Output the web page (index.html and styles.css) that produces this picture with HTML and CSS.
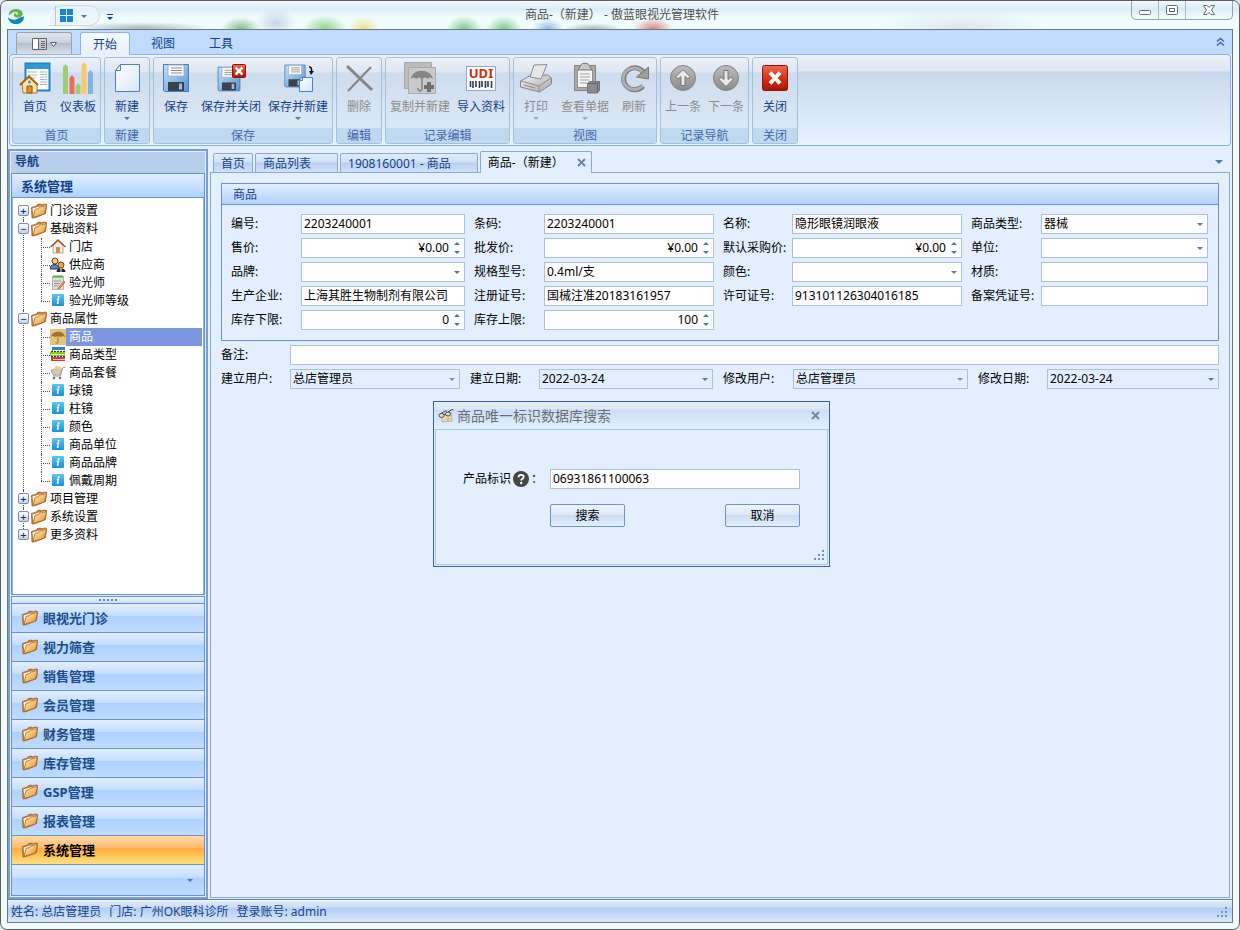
FILE: index.html
```
<!DOCTYPE html>
<html lang="zh-CN">
<head>
    <meta charset="UTF-8">
    <meta name="viewport" content="width=device-width, initial-scale=1.0">
    <title>商品-（新建） - 傲蓝眼视光管理软件</title>
    <link rel="stylesheet" href="styles.css">
</head>
<body>
    <!-- 公用图标 -->
    <svg class="defs" aria-hidden="true">
        <defs>
            <linearGradient id="gFolder" x1="0" y1="0" x2="1" y2="1">
                <stop offset="0" stop-color="#fff4d0"/><stop offset="0.5" stop-color="#f5c070"/><stop offset="1" stop-color="#d98422"/>
            </linearGradient>
            <linearGradient id="gBlue" x1="0" y1="0" x2="1" y2="1">
                <stop offset="0" stop-color="#c5e2fa"/><stop offset="1" stop-color="#5b93cf"/>
            </linearGradient>
            <linearGradient id="gPaper" x1="0" y1="0" x2="1" y2="1">
                <stop offset="0" stop-color="#ffffff"/><stop offset="1" stop-color="#d6e8fa"/>
            </linearGradient>
            <linearGradient id="gGray" x1="0" y1="0" x2="0" y2="1">
                <stop offset="0" stop-color="#bdbdbd"/><stop offset="1" stop-color="#8a8a8a"/>
            </linearGradient>
            <linearGradient id="gLight" x1="0" y1="0" x2="1" y2="1">
                <stop offset="0" stop-color="#f2f2f2"/><stop offset="1" stop-color="#a8a8a8"/>
            </linearGradient>
            <linearGradient id="gRed" x1="0" y1="0" x2="0" y2="1">
                <stop offset="0" stop-color="#f0694f"/><stop offset="0.5" stop-color="#d83418"/><stop offset="1" stop-color="#a81400"/>
            </linearGradient>
            <linearGradient id="gInfo" x1="0" y1="0" x2="0" y2="1">
                <stop offset="0" stop-color="#5cc4f0"/><stop offset="1" stop-color="#1a8fd8"/>
            </linearGradient>
            <symbol id="folder" viewBox="0 0 16 16">
                <path d="M.5 4.500l5-1.500 1-1.500 3-.5.5 1 4-1 1.500.5-1 9-10 4-3.500.5z" fill="#c98238" stroke="#a0602a" stroke-width=".8"/>
                <path d="M1.500 5.500l5-1.500 8-2-2 8-10 4z" fill="#fff6e0"/>
                <path d="M4 6.500l3.500-1 1-1.300 7-1.700-2 8.500-11.500 3.500z" fill="url(#gFolder)" stroke="#a86428" stroke-width=".8"/>
            </symbol>
            <symbol id="info" viewBox="0 0 16 16">
                <rect x="2" y="1" width="12" height="12" rx="1" fill="url(#gInfo)"/>
                <circle cx="8.600" cy="4" r="1" fill="#fff"/>
                <path d="M6.800 6.200h1.700l-1 4h1.300" fill="none" stroke="#fff" stroke-width="1.300"/>
            </symbol>
            <symbol id="floppy" viewBox="0 0 32 32">
                <path d="M3.500 2.500h25v27h-24l-1-1z" fill="url(#gBlue)" stroke="#4a7db5"/>
                <path d="M8 3h16v11h-16z" fill="#fdfdfd" stroke="#9db8d4"/>
                <path d="M11 6h11M11 8.500h11M11 11h11" stroke="#8a8a8a"/>
                <path d="M8 20h16v9h-16z" fill="#3c4248"/>
                <path d="M19 21.500h3v6h-3z" fill="#8fc0ea"/>
            </symbol>
        </defs>
    </svg>

    <div class="window">
        <header class="title-bar">
            <svg class="logo" viewBox="0 0 16 16" aria-hidden="true">
                <path d="M.5 7.500a7.500 7 0 0 1 14.500-2c-.5 4-6.500 5.500-9 2.500-1-1.500.5-3.500 2.500-2.500-.5 1.500.5 1.500 1.500 1 .5-2-1.500-3-3.500-2.500C4 4.500 2.500 6 .5 7.500z" fill="#64b346"/>
                <path d="M0 9c3 3 7 3.500 10 1.500 2-1.300 4-2 6-2a8 7.500 0 0 1-16 .5z" fill="#1586b8"/>
            </svg>
            <div class="quick-bar">
                <button type="button" aria-label="切换视图">
                    <svg width="14" height="14" viewBox="0 0 14 14"><path d="M0 0h6v6H0zM7 0h6v6H7zM0 7h6v6H0zM7 7h6v6H7z" fill="#1587d8"/></svg>
                    <i class="arrow"></i>
                </button>
            </div>
            <button type="button" class="quick-more" aria-label="自定义快速访问工具栏"><i class="arrow"></i></button>
            <h1>商品-（新建） - 傲蓝眼视光管理软件</h1>
            <div class="win-buttons">
                <button type="button" aria-label="最小化"><svg width="14" height="12" viewBox="0 0 14 12"><rect x="1.500" y="6.500" width="11" height="4" rx="1" fill="#fff" stroke="#666c7c"/></svg></button>
                <button type="button" aria-label="最大化"><svg width="14" height="12" viewBox="0 0 14 12"><rect x="1.500" y="1.500" width="11" height="9" rx="1" fill="#fff" stroke="#666c7c"/><rect x="4.500" y="4.500" width="5" height="3" fill="#fff" stroke="#666c7c"/></svg></button>
                <button type="button" class="wide" aria-label="关闭窗口"><svg width="14" height="12" viewBox="0 0 14 12"><path d="M1.500 1.500h3.500l2 2 2-2h3.500l-3 4.500 3 4.500h-3.500l-2-2-2 2H1.500l3-4.500z" fill="#fff" stroke="#666c7c"/></svg></button>
            </div>
        </header>

        <div class="client">
            <nav class="ribbon-tabs">
                <button type="button" class="app-button" aria-label="应用菜单">
                    <svg width="27" height="14" viewBox="0 0 27 14"><path d="M1.500 1.500h14v11h-14zM7.500 1v12M10 4.500h4M10 6.500h4M10 8.500h4M10 10.500h4" fill="none" stroke="#666"/><path d="M2 2h5v10h-5z" fill="#fff"/><path d="M19.500 5.500h6l-3 4z" fill="#fff" stroke="#666"/></svg>
                </button>
                <button type="button" class="ribbon-tab active">开始</button>
                <button type="button" class="ribbon-tab">视图</button>
                <button type="button" class="ribbon-tab">工具</button>
                <button type="button" class="collapse" aria-label="折叠功能区"><svg width="9" height="10" viewBox="0 0 9 10"><path d="M1 4.500l3.500-3 3.500 3M1 8.500l3.500-3 3.500 3" fill="none" stroke="#3f6ab0" stroke-width="1.500"/></svg></button>
            </nav>

            <div class="ribbon">
                <section class="group">
                    <div class="tools">
                        <button type="button" class="tool">
                            <svg viewBox="0 0 32 32">
                                <path d="M6.500 1.500h24v27h-24z" fill="#fff" stroke="#1b86c2" stroke-width="2"/><path d="M7 2h23v5h-23z" fill="#2a9ada"/>
                                <path d="M9 10h9M9 13h9M9 16h8M21 10h7M21 12.500h7M21 15h7M21 17.500h7M21 20h7M21 22.500h7" stroke="#9dbbd0"/>
                                <path d="M3 22l7-7 8 7v9h-14z" fill="#fbe3a8" stroke="#b87820"/><path d="M1 23l9-8.500 9 8.500" fill="none" stroke="#a86418" stroke-width="2"/>
                                <path d="M8 24h5v7h-5z" fill="#d98f38" stroke="#8c5410"/><circle cx="10.500" cy="20" r="1.500" fill="#49a"/>
                            </svg>
                            <span>首页</span>
                        </button>
                        <button type="button" class="tool">
                            <svg viewBox="0 0 32 32">
                                <path d="M1 32V5l2.500-3L6 5v27z" fill="#9cce74"/><path d="M7.500 32V16l2.500-3 2.500 3v16z" fill="#ef6a5a"/>
                                <path d="M13.500 32v-8l2.500-3 2.500 3v8z" fill="#9cce74"/><path d="M19.500 32V3L22 0l2.500 3v29z" fill="#fbc968"/>
                                <path d="M26 32V11l2.500-3L31 11v21z" fill="#7ab8e2"/>
                            </svg>
                            <span>仪表板</span>
                        </button>
                    </div>
                    <h2>首页</h2>
                </section>
                <section class="group">
                    <div class="tools">
                        <button type="button" class="tool">
                            <svg viewBox="0 0 32 32"><path d="M9.500 2.500h19v27h-24v-21z" fill="url(#gPaper)" stroke="#4a84c4"/><path d="M9.500 2.500v6h-5z" fill="#fff" stroke="#4a84c4"/></svg>
                            <span>新建</span><i class="arrow"></i>
                        </button>
                    </div>
                    <h2>新建</h2>
                </section>
                <section class="group">
                    <div class="tools">
                        <button type="button" class="tool"><svg viewBox="0 0 32 32"><use href="#floppy"/></svg><span>保存</span></button>
                        <button type="button" class="tool">
                            <svg viewBox="0 0 32 32">
                                <use href="#floppy" y="3" width="28" height="28"/>
                                <rect x="17.500" y="2.500" width="13" height="13" rx="1" fill="url(#gRed)" stroke="#8e1606"/><path d="M20.500 5.500l7 7M27.500 5.500l-7 7" stroke="#fff" stroke-width="2.500"/>
                            </svg>
                            <span>保存并关闭</span>
                        </button>
                        <button type="button" class="tool">
                            <svg viewBox="0 0 32 32">
                                <use href="#floppy" width="26" height="28"/>
                                <path d="M19.500 15.500h11v14h-13v-11z" fill="url(#gPaper)" stroke="#4a84c4"/><path d="M20.500 15.500v3h-3" fill="none" stroke="#4a84c4"/>
                                <path d="M27 5c2 0 3 1 2.500 5" fill="none" stroke="#111" stroke-width="1.500"/><path d="M27 9h5l-3 4z" fill="#111"/>
                            </svg>
                            <span>保存并新建</span><i class="arrow"></i>
                        </button>
                    </div>
                    <h2>保存</h2>
                </section>
                <section class="group">
                    <div class="tools">
                        <button type="button" class="tool" disabled><svg viewBox="0 0 32 32"><path d="M4 4l25 24" stroke="#858585" stroke-width="3"/><path d="M28 5L5 29" stroke="#858585" stroke-width="2"/></svg><span>删除</span></button>
                    </div>
                    <h2>编辑</h2>
                </section>
                <section class="group">
                    <div class="tools">
                        <button type="button" class="tool" disabled>
                            <svg viewBox="0 0 32 32">
                                <path d="M.5.500h27v26h-27z" fill="#bcbcbc" stroke="#a8a8a8"/><path d="M4.500 5.500h27v26h-27z" fill="#c9c9c9" stroke="#aaa"/>
                                <path d="M7 17c1-11 20-11 22 0-2-2-4-2-5 0-2-2-4-2-6 0-2-2-4-2-6 0-1-2-3-2-5 0z" fill="#858585"/>
                                <path d="M18 16v10c0 4-4 4-4 0" fill="none" stroke="#858585" stroke-width="1.500"/><path d="M20 25h10M25 20v10" stroke="#707070" stroke-width="4"/>
                            </svg>
                            <span>复制并新建</span>
                        </button>
                        <button type="button" class="tool">
                            <svg viewBox="0 0 32 32">
                                <rect x="1.500" y="4.500" width="29" height="24" fill="#fff" stroke="#8ea8d8"/>
                                <text x="16" y="16" class="udi">UDI</text>
                                <path d="M5.500 19v6M8 19v7M11 19v6M14.500 19v7M17 19v6M20.500 19v7M23 19v6M26.500 19v7" stroke="#333a50" stroke-width="1.600"/>
                            </svg>
                            <span>导入资料</span>
                        </button>
                    </div>
                    <h2>记录编辑</h2>
                </section>
                <section class="group">
                    <div class="tools">
                        <button type="button" class="tool" disabled>
                            <svg viewBox="0 0 32 32"><path d="M.5 19l9-5 18-1 4 3v6l-12 8-19-5z" fill="url(#gLight)" stroke="#858585"/><path d="M14 3l13-.5-6 14.500-11-2z" fill="#e6e6e6" stroke="#8c8c8c"/><path d="M1 19l18 5 12-8M19 24v6M4 23l11 3" fill="none" stroke="#8c8c8c"/></svg>
                            <span>打印</span><i class="arrow"></i>
                        </button>
                        <button type="button" class="tool" disabled>
                            <svg viewBox="0 0 32 32"><path d="M5.500 3.500h21v25h-21z" fill="#aaa" stroke="#858585"/><path d="M8.500 7.500h15v18h-15z" fill="#f4f4f4" stroke="#909090"/><path d="M11 5c0-5 10-5 10 0l2 3H9z" fill="#c8c8c8" stroke="#777"/><path d="M11 12h10M11 15h10M11 18h9M11 21h7" stroke="#a0a0a0"/><path d="M18.500 21.500l2-2h10v9l-2 2.500h-10z" fill="#8b8b8b" stroke="#777"/><path d="M18.500 21.500h10v9M28.500 21.500l2-2" stroke="#666" fill="none"/></svg>
                            <span>查看单据</span><i class="arrow"></i>
                        </button>
                        <button type="button" class="tool" disabled>
                            <svg viewBox="0 0 32 32"><path d="M25 24a11 11 0 1 1 1-13" fill="none" stroke="#7b7b7b" stroke-width="5"/><path d="M24.500 23.500a10.800 10.800 0 1 1 1-12" fill="none" stroke="#aeaeae" stroke-width="3"/><path d="M30.500 5v12l-12-2z" fill="#9c9c9c" stroke="#7b7b7b"/></svg>
                            <span>刷新</span>
                        </button>
                    </div>
                    <h2>视图</h2>
                </section>
                <section class="group">
                    <div class="tools">
                        <button type="button" class="tool" disabled>
                            <svg viewBox="0 0 32 32"><circle cx="16" cy="16" r="12.500" fill="url(#gGray)" stroke="#828282"/><path d="M16 7.500l7 7-2 2.500-3-2.500v9h-4v-9l-3 2.500-2-2.500z" fill="#e8e8e8" stroke="#777"/></svg>
                            <span>上一条</span>
                        </button>
                        <button type="button" class="tool" disabled>
                            <svg viewBox="0 0 32 32"><circle cx="16" cy="16" r="12.500" fill="url(#gGray)" stroke="#828282"/><path d="M16 24.500l7-7-2-2.500-3 2.500v-9h-4v9l-3-2.500-2 2.500z" fill="#e8e8e8" stroke="#777"/></svg>
                            <span>下一条</span>
                        </button>
                    </div>
                    <h2>记录导航</h2>
                </section>
                <section class="group">
                    <div class="tools">
                        <button type="button" class="tool">
                            <svg viewBox="0 0 32 32"><rect x="3.500" y="3.500" width="25" height="25" rx="2" fill="url(#gRed)" stroke="#8e1606"/><path d="M11 10.500l10 11M21 10.500l-10 11" stroke="#fff" stroke-width="4"/></svg>
                            <span>关闭</span>
                        </button>
                    </div>
                    <h2>关闭</h2>
                </section>
            </div>

            <div class="workspace">
                <aside class="sidebar">
                    <h2 class="side-title">导航</h2>
                    <div class="side-box tree-box">
                        <h3 class="side-group">系统管理</h3>
                        <ul class="tree">
                            <li><button type="button" class="toggle" aria-label="展开">+</button><a href="#"><svg class="ico"><use href="#folder"/></svg><span>门诊设置</span></a></li>
                            <li><button type="button" class="toggle" aria-label="收起">−</button><a href="#"><svg class="ico"><use href="#folder"/></svg><span>基础资料</span></a>
                                <ul>
                                    <li><a href="#"><svg class="ico" viewBox="0 0 16 16"><path d="M3 7v7h10V7L8 2z" fill="#f4efe8" stroke="#b8a898"/><path d="M.5 8L8 1l7.500 7" fill="none" stroke="#a8502c" stroke-width="1.500"/><path d="M6 8h4v6H6z" fill="#e2873c"/></svg><span>门店</span></a></li>
                                    <li><a href="#"><svg class="ico" viewBox="0 0 16 16"><circle cx="5" cy="4" r="3" fill="#f3c88c" stroke="#6b4318"/><path d="M0 12c0-6 9-6 9 0z" fill="#5d87c8" stroke="#234"/><circle cx="11" cy="8" r="3" fill="#f0a844" stroke="#6b4318"/><path d="M6.500 15c0-5 9-5 9 0z" fill="#222"/><path d="M11 11v4" stroke="#fff"/></svg><span>供应商</span></a></li>
                                    <li><a href="#"><svg class="ico" viewBox="0 0 16 16"><path d="M2.500 1.500h11v13h-11z" fill="#dcdcdc" stroke="#b4b4b4"/><path d="M3 1.500h10" stroke="#58b030" stroke-width="2"/><path d="M4 6h7M4 8.500h6M4 11h4" stroke="#999"/><path d="M14 6l-5 6-1 2 2-1 5-6z" fill="#f0b040" stroke="#c03020" stroke-width=".6"/></svg><span>验光师</span></a></li>
                                    <li><a href="#"><svg class="ico"><use href="#info"/></svg><span>验光师等级</span></a></li>
                                </ul>
                            </li>
                            <li><button type="button" class="toggle" aria-label="收起">−</button><a href="#"><svg class="ico"><use href="#folder"/></svg><span>商品属性</span></a>
                                <ul>
                                    <li><a href="#" class="selected" aria-current="page"><svg class="ico" viewBox="0 0 16 16"><path d="M0 0h16v16H0z" fill="#e6c47c"/><path d="M1 8c1-7 13-7 14 0l-2-1-2 1-3-1-3 1-2-1z" fill="#a5712c"/><path d="M8 7v6c0 2-2 2-2 0" fill="none" stroke="#a5712c"/></svg><span>商品</span></a></li>
                                    <li><a href="#"><svg class="ico" viewBox="0 0 16 16"><path d="M2 0h13v4H2z" fill="#2a86c8"/><path d="M0 5h15v4H0z" fill="#7fd01c"/><path d="M1 10h14v4H1z" fill="#d83c30"/><path d="M3 3.500h12M1 7.500h13" stroke="#e8f6d0"/><path d="M1 9.500h14M1 4.500h14" stroke="#333" stroke-dasharray="2 1"/><path d="M3 12.500h12" stroke="#f8c8b8"/></svg><span>商品类型</span></a></li>
                                    <li><a href="#"><svg class="ico" viewBox="0 0 16 16"><path d="M1 5l11-1-2 6H3z" fill="#cfc9bc" stroke="#b4ac9c"/><path d="M3 4l3-3 5 1v3z" fill="#ecd48c"/><path d="M15.500 2l-3 1-2 8H3" fill="none" stroke="#999"/><circle cx="4" cy="13" r="1.300" fill="#777"/><circle cx="10" cy="13" r="1.300" fill="#777"/></svg><span>商品套餐</span></a></li>
                                    <li><a href="#"><svg class="ico"><use href="#info"/></svg><span>球镜</span></a></li>
                                    <li><a href="#"><svg class="ico"><use href="#info"/></svg><span>柱镜</span></a></li>
                                    <li><a href="#"><svg class="ico"><use href="#info"/></svg><span>颜色</span></a></li>
                                    <li><a href="#"><svg class="ico"><use href="#info"/></svg><span>商品单位</span></a></li>
                                    <li><a href="#"><svg class="ico"><use href="#info"/></svg><span>商品品牌</span></a></li>
                                    <li><a href="#"><svg class="ico"><use href="#info"/></svg><span>佩戴周期</span></a></li>
                                </ul>
                            </li>
                            <li><button type="button" class="toggle" aria-label="展开">+</button><a href="#"><svg class="ico"><use href="#folder"/></svg><span>项目管理</span></a></li>
                            <li><button type="button" class="toggle" aria-label="展开">+</button><a href="#"><svg class="ico"><use href="#folder"/></svg><span>系统设置</span></a></li>
                            <li><button type="button" class="toggle" aria-label="展开">+</button><a href="#"><svg class="ico"><use href="#folder"/></svg><span>更多资料</span></a></li>
                        </ul>
                    </div>
                    <nav class="side-box side-nav">
                        <div class="splitter"><i></i><i></i><i></i><i></i><i></i></div>
                        <a href="#"><svg class="ico"><use href="#folder"/></svg>眼视光门诊</a>
                        <a href="#"><svg class="ico"><use href="#folder"/></svg>视力筛查</a>
                        <a href="#"><svg class="ico"><use href="#folder"/></svg>销售管理</a>
                        <a href="#"><svg class="ico"><use href="#folder"/></svg>会员管理</a>
                        <a href="#"><svg class="ico"><use href="#folder"/></svg>财务管理</a>
                        <a href="#"><svg class="ico"><use href="#folder"/></svg>库存管理</a>
                        <a href="#"><svg class="ico"><use href="#folder"/></svg>GSP管理</a>
                        <a href="#"><svg class="ico"><use href="#folder"/></svg>报表管理</a>
                        <a href="#" class="active"><svg class="ico"><use href="#folder"/></svg>系统管理</a>
                        <button type="button" class="overflow" aria-label="更多"><i class="arrow"></i></button>
                    </nav>
                </aside>

                <main class="main">
                    <div class="doc-tabs">
                        <button type="button" class="doc-tab">首页</button>
                        <button type="button" class="doc-tab closable">商品列表</button>
                        <button type="button" class="doc-tab closable">1908160001 - 商品</button>
                        <div class="doc-tab active">
                            <span>商品-（新建）</span>
                            <button type="button" class="close" aria-label="关闭标签"><svg width="9" height="9" viewBox="0 0 9 9"><path d="M1 1l7 7M8 1l-7 7" stroke="#6f85ab" stroke-width="2"/></svg></button>
                        </div>
                        <button type="button" class="tab-list" aria-label="标签列表"><i class="arrow"></i></button>
                    </div>

                    <form class="document">
                        <fieldset class="panel">
                            <legend>商品</legend>
                            <div class="fields">
                                <label for="code">编号:</label><div class="box"><input id="code" type="text" value="2203240001"></div>
                                <label for="barcode">条码:</label><div class="box"><input id="barcode" type="text" value="2203240001"></div>
                                <label for="name">名称:</label><div class="box"><input id="name" type="text" value="隐形眼镜润眼液"></div>
                                <label for="type">商品类型:</label><div class="box combo"><select id="type"><option>器械</option></select></div>

                                <label for="price">售价:</label><div class="box spin"><input id="price" type="text" value="¥0.00"></div>
                                <label for="wholesale">批发价:</label><div class="box spin"><input id="wholesale" type="text" value="¥0.00"></div>
                                <label for="cost">默认采购价:</label><div class="box spin"><input id="cost" type="text" value="¥0.00"></div>
                                <label for="unit">单位:</label><div class="box combo"><select id="unit"><option></option></select></div>

                                <label for="brand">品牌:</label><div class="box combo"><select id="brand"><option></option></select></div>
                                <label for="spec">规格型号:</label><div class="box"><input id="spec" type="text" value="0.4ml/支"></div>
                                <label for="color">颜色:</label><div class="box combo"><select id="color"><option></option></select></div>
                                <label for="material">材质:</label><div class="box"><input id="material" type="text"></div>

                                <label for="maker">生产企业:</label><div class="box"><input id="maker" type="text" value="上海其胜生物制剂有限公司"></div>
                                <label for="regno">注册证号:</label><div class="box"><input id="regno" type="text" value="国械注准20183161957"></div>
                                <label for="license">许可证号:</label><div class="box"><input id="license" type="text" value="913101126304016185"></div>
                                <label for="record">备案凭证号:</label><div class="box"><input id="record" type="text"></div>

                                <label for="min">库存下限:</label><div class="box spin"><input id="min" type="text" value="0"></div>
                                <label for="max">库存上限:</label><div class="box spin"><input id="max" type="text" value="100"></div>
                            </div>
                        </fieldset>
                        <div class="remark">
                            <label for="remark">备注:</label><div class="box"><input id="remark" type="text"></div>
                        </div>
                        <div class="audit">
                            <label for="creator">建立用户:</label><div class="box combo readonly off"><select id="creator"><option>总店管理员</option></select></div>
                            <label for="created">建立日期:</label><div class="box combo readonly"><input id="created" type="text" value="2022-03-24" readonly></div>
                            <label for="editor">修改用户:</label><div class="box combo readonly off"><select id="editor"><option>总店管理员</option></select></div>
                            <label for="edited">修改日期:</label><div class="box combo readonly"><input id="edited" type="text" value="2022-03-24" readonly></div>
                        </div>
                    </form>
                </main>
            </div>

            <footer class="status-bar">
                <span>姓名: 总店管理员</span><span>门店: 广州OK眼科诊所</span><span>登录账号: admin</span>
                <svg class="grip" viewBox="0 0 11 11"><path d="M8 0h2v2H8zM4 4h2v2H4zM8 4h2v2H8zM0 8h2v2H0zM4 8h2v2H4zM8 8h2v2H8z"/></svg>
            </footer>
        </div>

        <!-- 浮动窗口 -->
        <form class="dialog" role="dialog" aria-labelledby="dialogTitle">
            <div class="dialog-title">
                <svg class="ico" viewBox="0 0 16 16"><path d="M3 6l10-2 1 9-10 1z" fill="#e0d8c0" stroke="#bdb498"/><path d="M2 6l5-3 2 0M10 4l4-2.500 1.500.5" fill="none" stroke="#4c4c4c"/><ellipse cx="3.500" cy="7.500" rx="2.500" ry="2" fill="#ddd" stroke="#4c4c4c"/><ellipse cx="10" cy="6" rx="2.500" ry="2" fill="#ddd" stroke="#4c4c4c"/><path d="M6 7l2-.5" stroke="#4c4c4c"/><circle cx="10" cy="11" r="1.500" fill="#e8c02c"/></svg>
                <h2 id="dialogTitle">商品唯一标识数据库搜索</h2>
                <button type="button" class="close" aria-label="关闭"><svg width="9" height="9" viewBox="0 0 9 9"><path d="M1 1l7 7M8 1l-7 7" stroke="#6f85ab" stroke-width="2"/></svg></button>
            </div>
            <div class="dialog-body">
                <label for="udi">产品标识<svg class="help" viewBox="0 0 16 16"><circle cx="8" cy="8" r="8" fill="#454545"/><path d="M5.500 6.300c0-3.300 5.200-3.300 5.200-.3 0 1.700-2.500 1.900-2.500 3.600" fill="none" stroke="#fff" stroke-width="1.800"/><circle cx="8.200" cy="12" r="1.200" fill="#fff"/></svg>：</label>
                <div class="box"><input id="udi" type="text" value="06931861100063"></div>
                <div class="actions">
                    <button type="button">搜索</button>
                    <button type="button">取消</button>
                </div>
                <svg class="grip" viewBox="0 0 11 11"><path d="M8 0h2v2H8zM4 4h2v2H4zM8 4h2v2H8zM0 8h2v2H0zM4 8h2v2H4zM8 8h2v2H8z"/></svg>
            </div>
        </form>
    </div>
</body>
</html>
```
FILE: styles.css
```
* {
    box-sizing: border-box;
}
body {
    margin: 0;
    background-color: #dfe8ea;
    color: #000;
    font: 12px/18px "Noto Sans", "Noto Sans CJK SC", sans-serif;
}
h1, h2, h3, ul {
    margin: 0;
    padding: 0;
    font-size: 12px;
    font-weight: normal;
}
ul {
    list-style: none;
}
a {
    color: inherit;
    text-decoration: none;
}
button, input, select {
    margin: 0;
    padding: 0;
    border: none;
    background: none;
    color: inherit;
    font: inherit;
}
svg {
    display: block;
    flex: none;
}
.defs {
    position: absolute;
    width: 0;
    height: 0;
}
.ico {
    width: 16px;
    height: 16px;
}
.arrow {
    display: block;
    width: 0;
    height: 0;
    border: 3px solid transparent;
    border-top-color: #4a78b8;
    border-bottom: none;
}

/* 窗口外框 */
.window {
    position: relative;
    display: flex;
    flex-direction: column;
    min-height: 100vh;
    padding: 0 6px 6px;
    border: 1px solid #5d5f61;
    border-radius: 7px;
    background-color: #f0fcfc;
    background-image:
        radial-gradient(ellipse 20px 12px at 240px 28px, #82bd8c, transparent),
        radial-gradient(ellipse 70px 6px at 140px 27px, #a9b9bd, transparent),
        radial-gradient(ellipse 20px 14px at 275px 22px, #c8d4ea, transparent),
        radial-gradient(ellipse 22px 14px at 324px 28px, #8dd48d, transparent),
        radial-gradient(ellipse 16px 14px at 363px 29px, #f2dc84, transparent),
        radial-gradient(ellipse 18px 14px at 463px 29px, #7cc48c, transparent),
        radial-gradient(ellipse 18px 14px at 503px 29px, #7cc48c, transparent),
        radial-gradient(ellipse 16px 10px at 547px 28px, #8cb8f0, transparent),
        radial-gradient(ellipse 30px 6px at 592px 28px, #a8b4bc, transparent),
        radial-gradient(ellipse 20px 12px at 652px 28px, #d88484, transparent),
        radial-gradient(ellipse 90px 20px at 960px 28px, #dce8e8, transparent),
        linear-gradient(#f4fafe 0, #d9ecf9 8px, #effcfc 16px, #effffc 28px, transparent 30px);
}
.title-bar {
    display: flex;
    height: 28px;
}
.title-bar h1 {
    flex: 1;
    padding-top: 5px;
    color: #4c5054;
    text-align: center;
    text-shadow: 0 0 5px #fff;
}
.logo {
    width: 16px;
    height: 16px;
    margin: 7px 0 0 1px;
}
.quick-bar {
    height: 21px;
    margin: 4px 0 0 24px;
    padding: 0 12px 0 6px;
    border: 1px solid #cfdae4;
    border-left-color: #fff;
    border-radius: 16px 11px 11px 2px;
    background-color: rgba(235, 243, 252, 0.7);
}
.quick-bar button {
    display: flex;
    align-items: center;
    gap: 7px;
    height: 20px;
    padding-left: 4px;
    border-left: 1px solid #b8c6d4;
}
.quick-more {
    align-self: center;
    margin: 4px 0 0 7px;
    padding-top: 2px;
    border-top: 1px solid #15428b;
}
.quick-more .arrow {
    border-top-color: #15428b;
}
.win-buttons {
    display: flex;
    height: 19px;
    border: 1px solid #9aa2aa;
    border-top: none;
    border-radius: 0 0 5px 5px;
}
.win-buttons button {
    display: flex;
    justify-content: center;
    width: 27px;
    padding-top: 3px;
    border-right: 1px solid #b0b8be;
}
.win-buttons .wide {
    width: 46px;
    border-right: none;
}
.client {
    flex: 1;
    display: flex;
    flex-direction: column;
    border: 1px solid #707880;
    background-color: #e3efff;
}

/* 功能区 */
.ribbon-tabs {
    display: flex;
    align-items: flex-end;
    height: 24px;
    padding: 0 8px;
    background-color: #bfdbff;
    color: #15428b;
}
.app-button {
    display: flex;
    align-items: center;
    justify-content: center;
    width: 56px;
    height: 22px;
    margin-right: 8px;
    border: 1px solid #98a4b4;
    border-bottom: none;
    border-radius: 3px 3px 0 0;
    background: linear-gradient(#dfe5ee 0, #cbd2dd 45%, #b4bece 50%, #d8e2ec);
}
.ribbon-tab {
    width: 50px;
    height: 22px;
    margin-right: 8px;
    padding-top: 2px;
    border-radius: 3px 3px 0 0;
}
.ribbon-tab.active {
    position: relative;
    height: 23px;
    margin-bottom: -1px;
    border: 1px solid #8db2e3;
    border-bottom: none;
    background: linear-gradient(#f6faff, #e7effa);
}
.collapse {
    margin: 0 -1px 7px auto;
}
.ribbon {
    display: flex;
    gap: 3px;
    height: 92px;
    margin: 0 1px 3px;
    padding: 2px;
    border: 1px solid #8db2e3;
    border-bottom-color: #86b4cc;
    border-radius: 4px;
    background: linear-gradient(#eef2fa 0, #dbe6f4 16px, #c9d9ec 17px, #d8e6f6 60%, #e6f3ff);
}
.group {
    display: flex;
    flex-direction: column;
    height: 87px;
    border: 1px solid #a3c0dc;
    border-radius: 3px;
    background: linear-gradient(#ebf0f8 0, #dde7f4 14px, #cddcee 15px, #dfebf8);
    overflow: hidden;
}
.group h2 {
    height: 15px;
    background-color: #c1d8f1;
    color: #3e6aaa;
    line-height: 16px;
    text-align: center;
}
.tools {
    flex: 1;
    display: flex;
    gap: 1px;
    padding: 4px 1px 0;
}
.tool {
    display: flex;
    flex-direction: column;
    align-items: center;
    min-width: 42px;
    padding: 0 3px;
    color: #15428b;
    white-space: nowrap;
}
.tool svg {
    width: 32px;
    height: 32px;
}
.tool span {
    margin: 4px 0 1px;
}
.tool:disabled {
    color: #8d8d8d;
}
.tool:disabled .arrow {
    opacity: 0.5;
}
.udi {
    fill: #d42a10;
    font: bold 13px "Noto Sans", sans-serif;
    text-anchor: middle;
}

/* 左侧导航 */
.workspace {
    flex: 1;
    display: flex;
    gap: 2px;
}
.sidebar {
    display: flex;
    flex-direction: column;
    width: 200px;
    padding: 1px;
    border: 2px solid #7a9fd0;
    background-color: #e3efff;
}
.side-title {
    height: 21px;
    padding-left: 4px;
    background-color: #b8cfea;
    color: #15428b;
    font-weight: bold;
    line-height: 20px;
}
.side-box {
    border: 1px solid #6593cf;
}
.tree-box {
    flex: 1;
    display: flex;
    flex-direction: column;
    margin-bottom: 1px;
}
.side-group {
    height: 24px;
    padding-left: 9px;
    border-bottom: 1px solid #6593cf;
    background: linear-gradient(#e3efff, #aed1ff);
    color: #15428b;
    font-size: 13px;
    font-weight: bold;
    line-height: 24px;
}
.tree {
    flex: 1;
    padding: 4px 1px 0 5px;
    border: 1px solid #8fb3e4;
    border-width: 0 1px;
    background-color: #fff;
}
.tree li {
    position: relative;
}
.tree > li::before {
    content: "";
    position: absolute;
    top: 0;
    bottom: 0;
    left: 5px;
    border-left: 1px dotted #555;
}
.tree > li:first-child::before {
    top: 9px;
}
.tree > li:last-child::before {
    bottom: 9px;
}
.tree > li > a {
    padding-left: 13px;
}
.tree a {
    display: flex;
    align-items: center;
    height: 18px;
}
.tree a span {
    flex: 1;
    padding-left: 3px;
}
.tree ul {
    margin-left: 23px;
}
.tree ul li {
    padding-left: 9px;
}
.tree ul li::before {
    content: "";
    position: absolute;
    top: 0;
    bottom: 0;
    left: 0;
    border-left: 1px dotted #555;
}
.tree ul li:last-child::before {
    bottom: 9px;
}
.tree ul li::after {
    content: "";
    position: absolute;
    top: 9px;
    left: 0;
    width: 9px;
    border-top: 1px dotted #555;
}
.tree .selected span {
    background-color: #7c96df;
    color: #fff;
}
.toggle {
    position: absolute;
    top: 3px;
    left: 0;
    width: 11px;
    height: 11px;
    border: 1px solid #7c8cb0;
    border-radius: 2px;
    background: linear-gradient(#fff, #c8d4ea);
    color: #1c2c58;
    font-size: 11px;
    line-height: 8px;
}
.splitter {
    display: flex;
    align-items: center;
    justify-content: center;
    gap: 2px;
    height: 7px;
    border-bottom: 1px solid #6593cf;
    background: linear-gradient(#f0f7ff, #c8dffc);
}
.splitter i {
    width: 2px;
    height: 2px;
    background-color: #5c88c8;
}
.side-nav a {
    display: flex;
    align-items: center;
    gap: 5px;
    height: 29px;
    padding-left: 10px;
    border-bottom: 1px solid #6593cf;
    background: linear-gradient(#e3efff 0, #c4ddff 42%, #add1ff 43%, #c0dbff);
    color: #204d89;
    font-size: 13px;
    font-weight: bold;
}
.side-nav a.active {
    background: linear-gradient(#ffd9aa 0, #ffbb6e 42%, #ffab3f 43%, #fee17a);
    color: #000;
}
.overflow {
    display: flex;
    align-items: center;
    justify-content: flex-end;
    width: 100%;
    height: 30px;
    padding-right: 11px;
    background: linear-gradient(#e3efff 0, #c4ddff 42%, #add1ff 43%, #c0dbff);
}

/* 文档区 */
.main {
    flex: 1;
    display: flex;
    flex-direction: column;
    min-width: 0;
    padding: 2px 2px 1px 0;
}
.doc-tabs {
    display: flex;
    align-items: flex-end;
    gap: 2px;
    height: 21px;
    padding-left: 3px;
}
.doc-tab {
    height: 19px;
    padding: 0 7px;
    border: 1px solid #8ca9d2;
    border-bottom: none;
    border-radius: 2px 2px 0 0;
    background: linear-gradient(#dfecfe 0, #d0e1f8 45%, #b8d0f0 50%, #d0e2fa);
    color: #15428b;
    line-height: 19px;
    white-space: nowrap;
}
.doc-tab.closable {
    padding-right: 26px;
}
.doc-tab.active {
    position: relative;
    display: flex;
    align-items: center;
    gap: 13px;
    height: 22px;
    margin-bottom: -1px;
    padding: 0 5px 0 7px;
    background: #e3efff;
    color: #000;
}
.tab-list {
    align-self: center;
    margin: 0 7px 0 auto;
}
.tab-list .arrow {
    border-width: 4px 4px 0;
}
.document {
    flex: 1;
    padding: 10px;
    border: 1px solid #8ca9d2;
}
.panel {
    min-width: 0;
    margin: 0 0 4px;
    padding: 0;
    border: 1px solid #6593cf;
}
.panel legend {
    float: left;
    width: 100%;
    height: 21px;
    padding: 0 11px;
    border-bottom: 1px solid #6593cf;
    background: linear-gradient(#e3efff, #b0d2ff);
    color: #15428b;
    line-height: 22px;
}
.fields {
    clear: both;
    display: grid;
    grid-template-columns: 70px 173fr 70px 179fr 69px 179fr 70px 167fr;
    row-gap: 4px;
    padding: 9px 10px 10px 9px;
}
.fields .box {
    margin-right: 9px;
}
.fields .box:nth-of-type(4n) {
    margin-right: 0;
}
.fields label, .remark label, .audit label {
    height: 20px;
    line-height: 20px;
    white-space: nowrap;
}
.remark {
    display: grid;
    grid-template-columns: 69px 1fr;
    margin-bottom: 4px;
}
.audit {
    display: grid;
    grid-template-columns: 69px 180fr 69px 184fr 70px 185fr 69px 172fr;
}
.audit .box {
    margin-right: 10px;
}
.audit .box:last-child {
    margin-right: 0;
}
.box {
    position: relative;
    height: 20px;
    border: 1px solid #abc1de;
    background-color: #fff;
}
.box input, .box select {
    display: block;
    width: 100%;
    height: 18px;
    padding: 0 2px;
    border-radius: 0;
    outline: none;
    appearance: none;
    line-height: 18px;
}
.box.readonly {
    background-color: #e3efff;
}
.spin input {
    padding-right: 15px;
    text-align: right;
}
.combo::after, .spin::before, .spin::after {
    content: "";
    position: absolute;
    right: 4px;
    border: 3px solid transparent;
    pointer-events: none;
}
.combo::after {
    top: 8px;
    border-top-color: #4a78b8;
    border-bottom: none;
}
.combo.off::after {
    border-top-color: #909090;
}
.spin::before {
    top: 3px;
    border-top: none;
    border-bottom-color: #4a78b8;
}
.spin::after {
    bottom: 3px;
    border-bottom: none;
    border-top-color: #4a78b8;
}

/* 状态栏 */
.status-bar {
    display: flex;
    gap: 8px;
    height: 23px;
    padding: 2px 4px 0 3px;
    border-top: 1px solid #567db0;
    background: linear-gradient(#fff 0, #d9e7f8 2px, #cbdff6 7px, #b0cff3 8px, #dbe7fa);
    color: #15428b;
    line-height: 20px;
}
.grip {
    width: 11px;
    height: 11px;
    fill: #6593cf;
}
.status-bar .grip {
    margin: 5px 0 0 auto;
}

/* 搜索窗口 */
.dialog {
    position: absolute;
    top: 400px;
    left: 432px;
    width: 397px;
    border: 1px solid #3b619c;
    background-color: #e3efff;
}
.dialog-title {
    display: flex;
    align-items: center;
    gap: 3px;
    height: 28px;
    padding: 0 9px 0 4px;
    border-bottom: 1px solid #a3c8ee;
    background: linear-gradient(#e6edf8 0, #dbe7f7 7px, #cadef5 8px, #e3f1ff);
}
.dialog-title h2 {
    flex: 1;
    color: #6a6e76;
    font-size: 14px;
}
.dialog-body {
    position: relative;
    display: grid;
    grid-template-columns: 87px 250px;
    gap: 15px 0;
    margin: 0 1px 1px;
    padding: 39px 27px 37px;
    border: 1px solid #a3c8ee;
    border-top: none;
}
.dialog-body label {
    display: flex;
    align-items: center;
    height: 19px;
}
.help {
    width: 16px;
    height: 16px;
    margin: 0 2px;
}
.actions {
    grid-column: 2;
    display: flex;
    justify-content: space-between;
}
.actions button {
    width: 75px;
    height: 23px;
    border: 1px solid #6f94c6;
    border-radius: 2px;
    background: linear-gradient(#eef5fd 0, #dce9f8 45%, #cbdcf1 50%, #e3effd);
}
.dialog-body .grip {
    position: absolute;
    right: 2px;
    bottom: 3px;
}
```
